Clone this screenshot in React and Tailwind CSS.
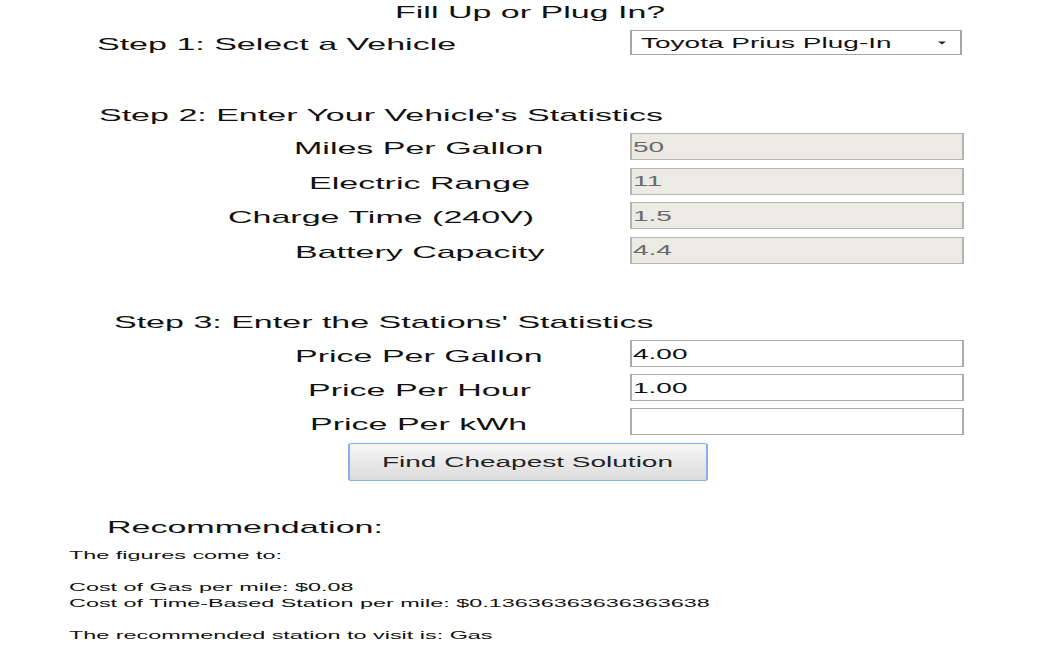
import React from "react";

function FieldRow({ label, value, disabled, labelPad, labelTop = "pt-[5px]" }) {
  return (
    <div className="flex h-[27px] items-center">
      <div className={"w-[314.5px] shrink-0 leading-[20px] " + labelTop}>
        <span className={"block whitespace-nowrap " + labelPad}>{label}</span>
      </div>
      <div
        className={
          "flex h-[27px] w-[167.5px] items-center border pl-[1px] text-[14px] leading-[16px] " +
          (disabled
            ? "border-[#b4b4b0] bg-[#ebebe4] text-[#6a6a6a]"
            : "border-[#ababab] bg-white text-[#111]")
        }
      >
        {value}
      </div>
    </div>
  );
}

export default function App() {
  return (
    <div className="min-h-[656px] w-[525px] origin-top-left scale-x-200 bg-white font-['Liberation_Sans',Arial,sans-serif] text-[17px] text-[#111]">
      {/* Title */}
      <div className="h-[22px] pl-[197.5px] pt-[2px] leading-[22px] whitespace-nowrap">Fill Up or Plug In?</div>

      {/* Step 1 */}
      <div className="mt-[8px] flex h-[25px] items-center">
        <div className="w-[314.5px] shrink-0 pl-[48.5px] pt-[4px] leading-[20px] whitespace-nowrap">
          Step 1: Select a Vehicle
        </div>
        <div className="flex h-[25px] w-[166px] items-center justify-between border border-[#a6a6a6] bg-white pl-[5px] pr-[7px] text-[14px] leading-[16px] text-[#111]">
          <span className="whitespace-nowrap">Toyota Prius Plug-In</span>
          <svg width="4" height="4" viewBox="0 0 4 4" className="mt-[1px]">
            <polygon points="0,0.5 4,0.5 2,3.5" fill="#222" />
          </svg>
        </div>
      </div>

      {/* Step 2 */}
      <div className="mt-[49px] h-[20px] pl-[49.5px] pt-[2px] leading-[20px] whitespace-nowrap">
        Step 2: Enter Your Vehicle's Statistics
      </div>
      <div className="mt-[9px] flex flex-col gap-[7.5px]">
        <FieldRow label="Miles Per Gallon" value="50" disabled labelPad="pl-[147px]" />
        <FieldRow label="Electric Range" value="11" disabled labelPad="pl-[154.5px]" />
        <FieldRow label="Charge Time (240V)" value="1.5" disabled labelPad="pl-[114px]" />
        <FieldRow label="Battery Capacity" value="4.4" disabled labelPad="pl-[147.5px]" />
      </div>

      {/* Step 3 */}
      <div className="mt-[47.5px] h-[20px] pl-[57px] pt-[2px] leading-[20px] whitespace-nowrap">
        Step 3: Enter the Stations' Statistics
      </div>
      <div className="mt-[9px] flex flex-col gap-[7px]">
        <FieldRow label="Price Per Gallon" value="4.00" labelPad="pl-[147.5px]" labelTop="pt-[6px]" />
        <FieldRow label="Price Per Hour" value="1.00" labelPad="pl-[154px]" labelTop="pt-[6px]" />
        <FieldRow label="Price Per kWh" value="" labelPad="pl-[155px]" labelTop="pt-[6px]" />
      </div>

      {/* Button */}
      <div className="mt-[8px] pl-[174px]">
        <button className="flex h-[38px] w-[179.5px] items-center justify-center rounded-[2px] border border-[#86b3e3] bg-gradient-to-b from-[#f7f7f7] to-[#dcdcdc] text-[14px] leading-[16px] text-[#222]">
          Find Cheapest Solution
        </button>
      </div>

      {/* Recommendation */}
      <div className="mt-[35px] h-[20px] pl-[53.5px] pt-[2px] leading-[20px] whitespace-nowrap">Recommendation:</div>
      <div className="mt-[11px] pl-[34.5px] text-[11.7px] leading-[16px] text-[#111]">
        <div className="whitespace-nowrap">The figures come to:</div>
        <div className="h-[16px]" />
        <div className="whitespace-nowrap">Cost of Gas per mile: $0.08</div>
        <div className="whitespace-nowrap">Cost of Time-Based Station per mile: $0.13636363636363638</div>
        <div className="h-[16px]" />
        <div className="whitespace-nowrap">The recommended station to visit is: Gas</div>
      </div>
    </div>
  );
}
